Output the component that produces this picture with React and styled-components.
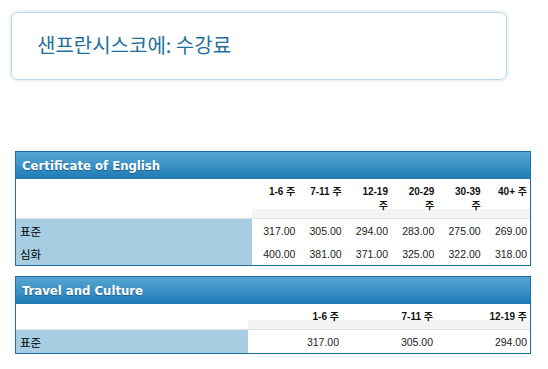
import React from "react";
import styled, { createGlobalStyle } from "styled-components";

const GlobalStyle = createGlobalStyle`
  body {
    margin: 0;
    background: #fff;
    font-family: "Liberation Sans", Arial, "Noto Sans CJK KR", sans-serif;
  }
`;

const Page = styled.div`
  width: 548px;
  padding: 12px 0 0 11px;
  box-sizing: border-box;
`;

const TitleBox = styled.div`
  width: 496px;
  height: 68px;
  box-sizing: border-box;
  border: 1px solid #bcd7e8;
  border-radius: 7px;
  box-shadow: 0 0 0 2px #ebf3f8;
  display: flex;
  align-items: center;
  padding: 0 0 2px 25px;
`;

const Title = styled.h1`
  margin: 0;
  font-family: "Noto Sans CJK KR", sans-serif;
  font-size: 20px;
  font-weight: 400;
  color: #1f6f9c;
  line-height: 1;
`;

const Tables = styled.div`
  margin: 71px 0 0 4px;
  width: 516px;
  display: flex;
  flex-direction: column;
  gap: 10px;
`;

const Card = styled.div`
  border: 1px solid #1b6fa2;
`;

const CardHead = styled.div`
  height: 27px;
  display: flex;
  align-items: center;
  padding: 0 6px;
  background: linear-gradient(to bottom, #58a6d3 0%, #3b92c6 50%, #1d7ab4 100%);
  color: #fff;
  font-family: "DejaVu Sans Condensed", "DejaVu Sans", sans-serif;
  font-weight: bold;
  font-size: 13px;
  text-shadow: 0 1px 1px rgba(0, 40, 80, 0.45);
`;

const Grid = styled.table`
  width: 100%;
  border-collapse: collapse;
  table-layout: fixed;
`;

const Th = styled.th`
  padding: 6px 3px 5px 8px;
  font-size: 10px;
  line-height: 14px;
  font-weight: bold;
  color: #111;
  text-align: right;
  vertical-align: top;
  border-bottom: 1px solid #e2e2e2;
  background: ${(p) =>
    p.$blank
      ? "#fff"
      : "linear-gradient(to bottom, #fff 0, #fff calc(100% - 9px), #f4f4f4 calc(100% - 9px))"};
`;

const Label = styled.td`
  background: #a6cde2;
  padding: 0 4px;
  height: 23px;
  font-family: "Noto Sans CJK KR", sans-serif;
  font-size: 11.5px;
  color: #000;
  text-align: left;
`;

const Num = styled.td`
  padding: 0 3px;
  height: 23px;
  font-size: 10.5px;
  color: #222;
  text-align: right;
`;

const tables = [
  {
    title: "Certificate of English",
    first: 236,
    weeks: ["1-6 주", "7-11 주", "12-19 주", "20-29 주", "30-39 주", "40+ 주"],
    rows: [
      ["표준", ["317.00", "305.00", "294.00", "283.00", "275.00", "269.00"]],
      ["심화", ["400.00", "381.00", "371.00", "325.00", "322.00", "318.00"]],
    ],
  },
  {
    title: "Travel and Culture",
    first: 232,
    weeks: ["1-6 주", "7-11 주", "12-19 주"],
    rows: [["표준", ["317.00", "305.00", "294.00"]]],
  },
];

function FeeTable({ title, first, weeks, rows }) {
  return (
    <Card>
      <CardHead>{title}</CardHead>
      <Grid>
        <colgroup>
          <col style={{ width: first }} />
          {weeks.map((w) => (
            <col key={w} />
          ))}
        </colgroup>
        <thead>
          <tr>
            <Th $blank />
            {weeks.map((w) => (
              <Th key={w}>{w}</Th>
            ))}
          </tr>
        </thead>
        <tbody>
          {rows.map(([name, prices]) => (
            <tr key={name}>
              <Label>{name}</Label>
              {prices.map((p, i) => (
                <Num key={i}>{p}</Num>
              ))}
            </tr>
          ))}
        </tbody>
      </Grid>
    </Card>
  );
}

export default function App() {
  return (
    <>
      <GlobalStyle />
      <Page>
        <TitleBox>
          <Title>샌프란시스코에: 수강료</Title>
        </TitleBox>
        <Tables>
          {tables.map((t) => (
            <FeeTable key={t.title} {...t} />
          ))}
        </Tables>
      </Page>
    </>
  );
}
